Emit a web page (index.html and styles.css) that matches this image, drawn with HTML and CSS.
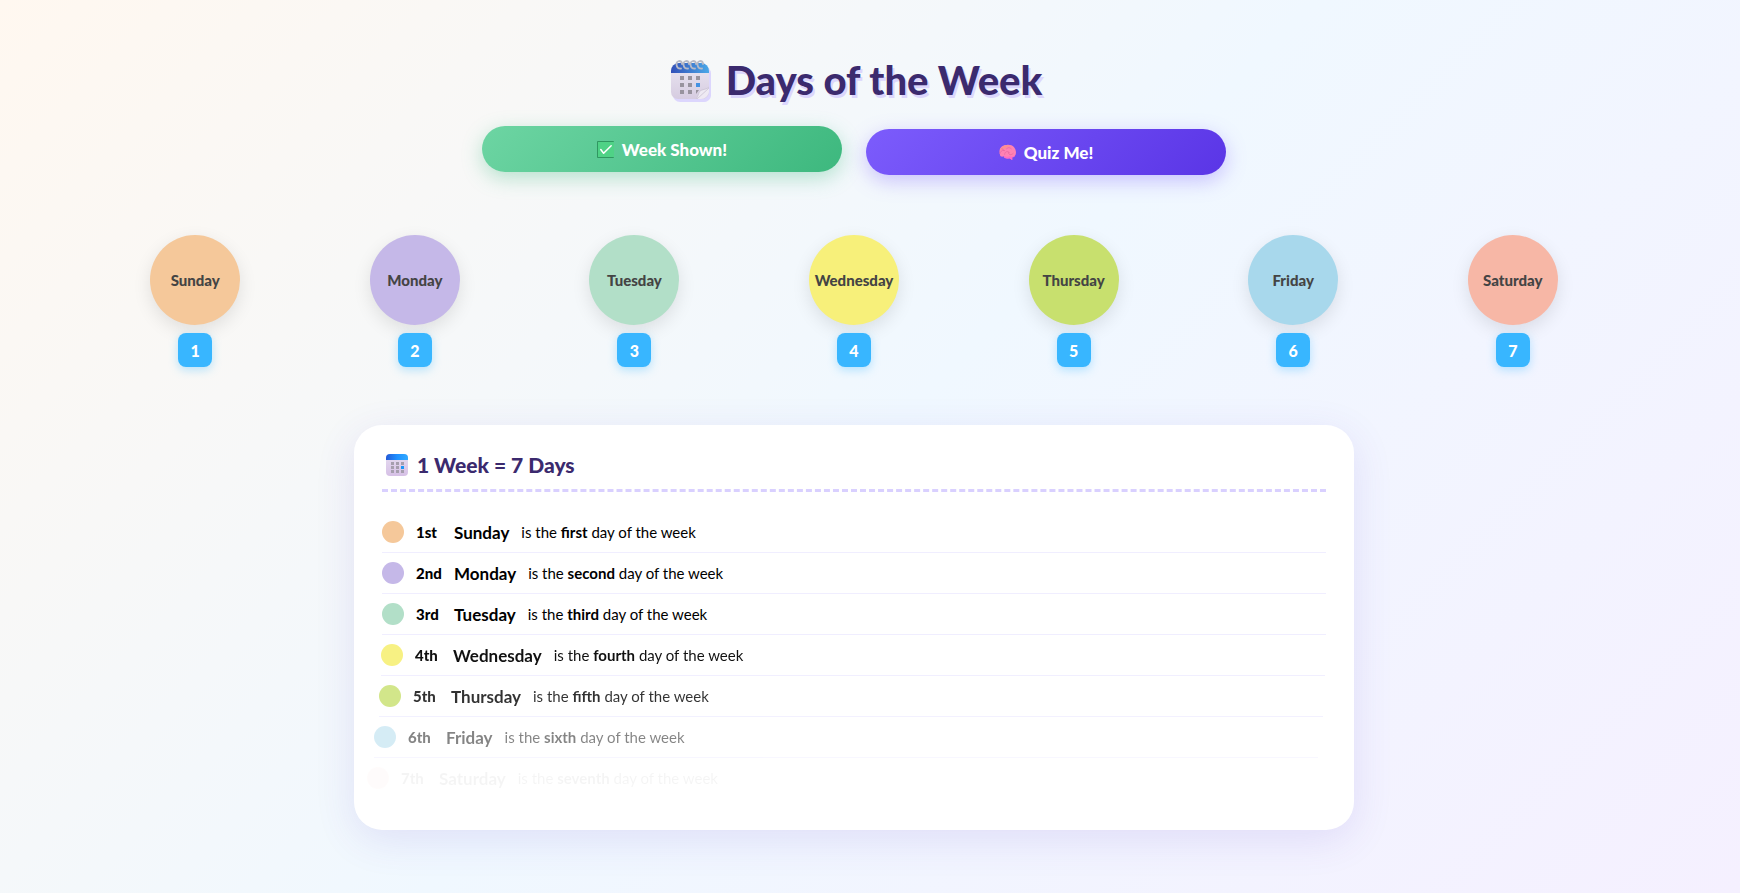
FILE: index.html
```html
<!DOCTYPE html>
<html lang="en">
<head>
    <meta charset="UTF-8">
    <meta name="viewport" content="width=device-width, initial-scale=1.0">
    <title>Days of the Week</title>
    <link rel="stylesheet" href="styles.css">
</head>
<body>

    <!-- Title -->
    <h1 class="title">
        <svg class="title-icon" viewBox="0 0 40 40" aria-hidden="true">
            <defs>
                <linearGradient id="calTop" x1="0" x2="1"><stop offset="0" stop-color="#3250b8"/><stop offset="1" stop-color="#4aa8e8"/></linearGradient>
                <linearGradient id="calPage" x1="0" y1="0" x2="0" y2="1"><stop offset="0" stop-color="#eae6f2"/><stop offset="1" stop-color="#d6cce0"/></linearGradient>
            </defs>
            <rect x="1" y="4" width="38" height="35" rx="7" fill="url(#calPage)"/>
            <path d="M1 13v-2a8 8 0 0 1 8-8h22a8 8 0 0 1 8 8v2z" fill="url(#calTop)"/>
            <g fill="#98939e">
                <path d="M10 16h4v4h-4zM18 16h4v4h-4zM26 16h4v4h-4zM10 23h4v4h-4zM18 23h4v4h-4zM10 30h4v4h-4zM18 30h4v4h-4zM26 30h3l-3 4z"/>
            </g>
            <path d="M26 23h4v4h-4z" fill="#4592e2"/>
            <path d="M26 39c3-3 2-8 6-9 3-1 5-1 7-3v5c-1 4-4 7-8 7z" fill="#eeeaf3"/>
            <path d="M26 39c3-3 2-8 6-9 3-1 5-1 7-3M27 39l12-11" fill="none" stroke="#c9c1d2" stroke-width="0.8"/>
            <g fill="none" stroke="#b8bac6" stroke-width="1.8" stroke-linecap="round">
                <path d="M11 8.500C6 9 5 2 9 1c2 0 3 1 3 3M18 8.500C13 9 12 2 16 1c2 0 3 1 3 3M25 8.500C20 9 19 2 23 1c2 0 3 1 3 3M32 8.500C27 9 26 2 30 1c2 0 3 1 3 3"/>
            </g>
        </svg>
        Days of the Week
    </h1>

    <!-- Buttons -->
    <div class="controls">
        <button type="button" class="btn btn-week active">
            <svg class="btn-icon" viewBox="0 0 18 18" aria-hidden="true">
                <rect x="0" y="0" width="18" height="18" rx="1" fill="#2f9460"/>
                <rect x="1" y="1" width="17" height="16" fill="#4fd286"/>
                <path d="M4 9l3 4 8-8" fill="none" stroke="#fff" stroke-width="1.6" stroke-linecap="round" stroke-linejoin="round"/>
            </svg>
            Week Shown!
        </button>
        <button type="button" class="btn btn-quiz">
            <svg class="btn-icon" viewBox="0 0 18 18" aria-hidden="true">
                <path d="M1 11C-1 5 3 1 8 1c6-1 10 3 10 8 0 3-2 5-4 5v3l-3-2c-3 1-6 0-6-2-2 1-4 0-4-2z" fill="#ff82b4"/>
                <path d="M1 7c1-4 4-6 8-6 2 0 4 1 5 2-3-1-6 0-7 2-2 0-4 1-6 2z" fill="#fb8f95"/>
                <path d="M5 12c2 2 4 2 6 1 3 1 5 0 6-2 0 2-1 3-3 3v3l-3-2c-3 1-6 0-6-3z" fill="#ff69c8"/>
                <path d="M1 10c1-3 3-4 5-3M3 5c1 0 2 1 2 2M8 5c2-2 4-1 5 0M6 11c0-3 3-4 5-2M10 9c0 3 3 3 5 1" fill="none" stroke="#e9689f" stroke-width="0.8" stroke-linecap="round"/>
            </svg>
            Quiz Me!
        </button>
    </div>

    <!-- Day circles -->
    <ol class="days">
        <li class="day"><div class="circle sunday">Sunday</div><div class="number">1</div></li>
        <li class="day"><div class="circle monday">Monday</div><div class="number">2</div></li>
        <li class="day"><div class="circle tuesday">Tuesday</div><div class="number">3</div></li>
        <li class="day"><div class="circle wednesday">Wednesday</div><div class="number">4</div></li>
        <li class="day"><div class="circle thursday">Thursday</div><div class="number">5</div></li>
        <li class="day"><div class="circle friday">Friday</div><div class="number">6</div></li>
        <li class="day"><div class="circle saturday">Saturday</div><div class="number">7</div></li>
    </ol>

    <!-- Week panel -->
    <section class="panel">
        <h2 class="panel-title">
            <svg class="panel-icon" viewBox="0 0 22 22" aria-hidden="true">
                <defs>
                    <linearGradient id="smallTop" x1="0" x2="1"><stop offset="0" stop-color="#2459d6"/><stop offset="0.5" stop-color="#1e90ff"/><stop offset="1" stop-color="#31aaff"/></linearGradient>
                    <linearGradient id="smallPage" x1="0" y1="0" x2="0" y2="1"><stop offset="0" stop-color="#e6def0"/><stop offset="1" stop-color="#d6c0e6"/></linearGradient>
                </defs>
                <rect width="22" height="22" rx="4" fill="url(#smallPage)"/>
                <path d="M0 6V4a4 4 0 0 1 4-4h14a4 4 0 0 1 4 4v2z" fill="url(#smallTop)"/>
                <path d="M5 8h3v3H5zM10 8h3v3h-3zM15 8h3v3h-3zM5 12h3v3H5zM10 12h3v3h-3zM5 16h3v3H5zM10 16h3v3h-3zM15 16h3v3h-3z" fill="#a69eae"/>
                <path d="M15 12h3v3h-3z" fill="#1c96f4"/>
            </svg>
            1 Week = 7 Days
        </h2>
        <ul class="week-list">
            <li class="week-row"><span class="dot sunday"></span><span class="ordinal">1st</span><span class="name">Sunday</span><span class="fact">is the <strong>first</strong> day of the week</span></li>
            <li class="week-row"><span class="dot monday"></span><span class="ordinal">2nd</span><span class="name">Monday</span><span class="fact">is the <strong>second</strong> day of the week</span></li>
            <li class="week-row"><span class="dot tuesday"></span><span class="ordinal">3rd</span><span class="name">Tuesday</span><span class="fact">is the <strong>third</strong> day of the week</span></li>
            <li class="week-row"><span class="dot wednesday"></span><span class="ordinal">4th</span><span class="name">Wednesday</span><span class="fact">is the <strong>fourth</strong> day of the week</span></li>
            <li class="week-row"><span class="dot thursday"></span><span class="ordinal">5th</span><span class="name">Thursday</span><span class="fact">is the <strong>fifth</strong> day of the week</span></li>
            <li class="week-row"><span class="dot friday"></span><span class="ordinal">6th</span><span class="name">Friday</span><span class="fact">is the <strong>sixth</strong> day of the week</span></li>
            <li class="week-row"><span class="dot saturday"></span><span class="ordinal">7th</span><span class="name">Saturday</span><span class="fact">is the <strong>seventh</strong> day of the week</span></li>
        </ul>
    </section>

</body>
</html>
```
FILE: styles.css
```css
* {
    box-sizing: border-box;
    margin: 0;
    padding: 0;
}
body {
    min-height: 100vh;
    display: flex;
    flex-direction: column;
    align-items: center;
    padding: 50px 32px 48px 0;
    background: linear-gradient(135deg, #fff8f0 0%, #f0f8ff 50%, #f5f0ff 100%);
    font-family: Lato, "Open Sans", sans-serif;
    color: #000;
}

/* Title */
.title {
    display: flex;
    align-items: center;
    gap: 16px;
    height: 60px;
    padding-left: 4px;
    margin-bottom: 19px;
    font-size: 40px;
    font-weight: 900;
    color: #3b2a6e;
    text-shadow: 2px 3px 0 #dcd6fd;
}
.title-icon {
    width: 40px;
    height: 40px;
    filter: drop-shadow(2px 3px 0 #dcd6fd);
}

/* Buttons */
.controls {
    display: flex;
    justify-content: center;
    gap: 24px;
    width: 100%;
    margin-bottom: 60px;
}
.btn {
    display: flex;
    align-items: center;
    justify-content: center;
    gap: 8px;
    width: 360px;
    height: 46px;
    border: none;
    border-radius: 50px;
    font-family: inherit;
    font-size: 17px;
    font-weight: 900;
    color: white;
    cursor: pointer;
}
.btn-icon {
    width: 17px;
    height: 17px;
}
.btn-week {
    background: linear-gradient(135deg, #6dd5a3, #3db87e);
    box-shadow: 0 6px 20px rgba(61, 184, 126, 0.35);
}
.btn-quiz {
    background: linear-gradient(135deg, #7c5cfc, #5a35e6);
    box-shadow: 0 6px 20px rgba(124, 92, 252, 0.35);
}
.btn:hover,
.btn.active {
    transform: translateY(-3px);
}

/* Day circles */
.days {
    display: grid;
    grid-template-columns: repeat(7, 1fr);
    width: 90%;
    margin-bottom: 58px;
    list-style: none;
}
.day {
    display: flex;
    flex-direction: column;
    align-items: center;
    gap: 8px;
}
.circle {
    display: flex;
    align-items: center;
    justify-content: center;
    width: 90px;
    height: 90px;
    border-radius: 50%;
    font-size: 15px;
    font-weight: 900;
    color: #444;
    box-shadow: 0 6px 18px rgba(0, 0, 0, 0.1);
}
.number {
    display: flex;
    align-items: center;
    justify-content: center;
    width: 34px;
    height: 34px;
    border-radius: 8px;
    background: #38b6ff;
    color: white;
    font-size: 16px;
    font-weight: 900;
    box-shadow: 0 3px 10px rgba(56, 182, 255, 0.35);
}
.sunday { background: #f5c89a; }
.monday { background: #c5b8e8; }
.tuesday { background: #b2dfc8; }
.wednesday { background: #f7f07a; }
.thursday { background: #c8e06e; }
.friday { background: #a8d8ec; }
.saturday { background: #f7b7a6; }

/* Week panel */
.panel {
    width: 90%;
    max-width: 1000px;
    padding: 24px 28px 32px;
    border-radius: 28px;
    background: white;
    box-shadow: 0 10px 40px rgba(90, 60, 200, 0.12);
}
.panel-title {
    display: flex;
    align-items: center;
    gap: 9px;
    padding: 0 4px 8px;
    margin-bottom: 20px;
    border-bottom: 3px dashed #d9d0ff;
    font-size: 21px;
    line-height: 32px;
    font-weight: 900;
    color: #3b2a6e;
}
.panel-icon {
    width: 22px;
    height: 22px;
}
.week-list {
    list-style: none;
}
.week-row {
    display: flex;
    align-items: center;
    gap: 12px;
    height: 41px;
    border-bottom: 1px solid #f0eeff;
}
.week-row:last-child {
    height: 40px;
    border-bottom: none;
}
.dot {
    width: 22px;
    height: 22px;
    border-radius: 50%;
}
.ordinal {
    min-width: 26px;
    font-size: 15px;
    font-weight: 900;
}
.name {
    font-size: 17px;
    font-weight: 700;
}
.fact {
    font-size: 15px;
}

.week-row:nth-child(4) {
    opacity: 0.93;
    transform: translateX(-1px);
}
.week-row:nth-child(5) {
    opacity: 0.8;
    transform: translateX(-3px);
}
.week-row:nth-child(6) {
    opacity: 0.48;
    transform: translateX(-8px);
}
.week-row:nth-child(7) {
    opacity: 0.04;
    transform: translateX(-15px);
}
```
